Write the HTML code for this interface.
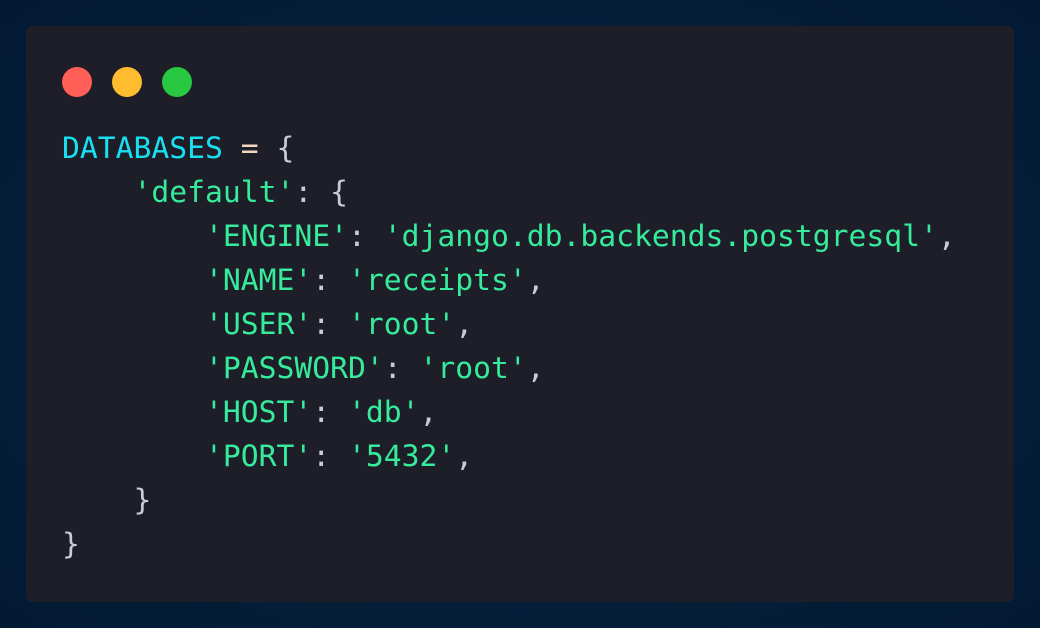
<!DOCTYPE html>
<html><head><meta charset="utf-8"><style>
html,body{margin:0;padding:0;}
body{width:1040px;height:628px;overflow:hidden;background:radial-gradient(ellipse at 50% 50%,#062a4c 0%,#041f3a 60%,#031a33 100%);position:relative;}
.card{position:absolute;left:26px;top:26px;width:988px;height:576px;background:#1d1e28;border-radius:6px;}
.dot{position:absolute;top:67px;width:30px;height:30px;border-radius:50%;}
pre{position:absolute;left:62px;top:127px;margin:0;font-family:"DejaVu Sans Mono","Liberation Mono",monospace;font-size:29.7px;line-height:44px;color:#c9ccd8;}
.c{color:#18e0f2}.s{color:#36eb9c}.e{color:#f3d6bf}
</style></head><body>
<div class="card"></div>
<div class="dot" style="left:62px;background:#ff5f57"></div>
<div class="dot" style="left:112px;background:#febc2e"></div>
<div class="dot" style="left:162px;background:#28c840"></div>
<pre><span class="c">DATABASES</span> <span class="e">=</span> {
    <span class="s">'default'</span>: {
        <span class="s">'ENGINE'</span>: <span class="s">'django.db.backends.postgresql'</span>,
        <span class="s">'NAME'</span>: <span class="s">'receipts'</span>,
        <span class="s">'USER'</span>: <span class="s">'root'</span>,
        <span class="s">'PASSWORD'</span>: <span class="s">'root'</span>,
        <span class="s">'HOST'</span>: <span class="s">'db'</span>,
        <span class="s">'PORT'</span>: <span class="s">'5432'</span>,
    }
}</pre>
</body></html>
